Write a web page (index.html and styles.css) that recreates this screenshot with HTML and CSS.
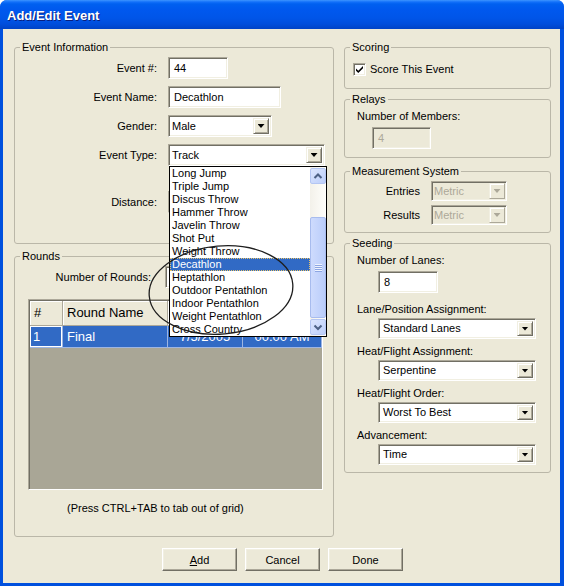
FILE: index.html
```html
<!DOCTYPE html>
<html>
<head>
<meta charset="utf-8">
<title>Add/Edit Event</title>
<link rel="stylesheet" href="styles.css">
</head>
<body>
<div class="window">
  <div class="titlebar"><span class="title">Add/Edit Event</span></div>
  <div class="client">
    <div class="columns">
      <div class="col-left">
        <fieldset class="group g-info">
          <legend>Event Information</legend>
          <div class="form">
            <span class="lbl">Event #:</span>
            <div class="tb w60">44</div>
            <span class="lbl">Event Name:</span>
            <div class="tb w113">Decathlon</div>
            <span class="lbl">Gender:</span>
            <div class="sel w104"><span class="val">Male</span><span class="dbtn"><i class="tri"></i></span></div>
            <span class="lbl">Event Type:</span>
            <div class="sel w157 anchor">
              <span class="val">Track</span><span class="dbtn"><i class="tri"></i></span>
              <div class="droplist">
                <ul class="items">
                  <li>Long Jump</li>
                  <li>Triple Jump</li>
                  <li>Discus Throw</li>
                  <li>Hammer Throw</li>
                  <li>Javelin Throw</li>
                  <li>Shot Put</li>
                  <li>Weight Throw</li>
                  <li class="hl">Decathlon</li>
                  <li>Heptathlon</li>
                  <li>Outdoor Pentathlon</li>
                  <li>Indoor Pentathlon</li>
                  <li>Weight Pentathlon</li>
                  <li>Cross Country</li>
                </ul>
                <div class="vscroll">
                  <div class="sbtn"><svg width="14" height="14" viewBox="0 0 14 14"><polyline points="3.5,9 7,5.5 10.5,9" fill="none" stroke="#4D6185" stroke-width="2"/></svg></div>
                  <div class="thumb"><i class="grip"></i></div>
                  <div class="sbtn down"><svg width="14" height="14" viewBox="0 0 14 14"><polyline points="3.5,5.5 7,9 10.5,5.5" fill="none" stroke="#4D6185" stroke-width="2"/></svg></div>
                </div>
              </div>
            </div>
            <span class="lbl dist">Distance:</span>
            <div class="tb w60 dist"></div>
          </div>
        </fieldset>

        <fieldset class="group g-rounds">
          <legend>Rounds</legend>
          <div class="rounds-row">
            <span class="lbl">Number of Rounds:</span>
            <div class="tb w60"></div>
          </div>
          <div class="grid">
            <div class="grow ghead">
              <div class="gc c1">#</div>
              <div class="gc c2">Round Name</div>
              <div class="gc c3"></div>
              <div class="gc c4"></div>
            </div>
            <div class="grow gsel">
              <div class="gc c1 focus">1</div>
              <div class="gc c2">Final</div>
              <div class="gc c3">7/5/2005</div>
              <div class="gc c4">00:00 AM</div>
            </div>
          </div>
          <p class="note">(Press CTRL+TAB to tab out of grid)</p>
        </fieldset>
      </div>

      <div class="col-right">
        <fieldset class="group g-scoring">
          <legend>Scoring</legend>
          <div class="check-row">
            <span class="chk"><svg width="11" height="11" viewBox="0 0 11 11"><path d="M2 4.5 L4.3 6.8 L9 2.1 L9 4.3 L4.3 9 L2 6.7 Z" fill="#000"/></svg></span>
            <span class="chk-lbl">Score This Event</span>
          </div>
        </fieldset>

        <fieldset class="group g-relays">
          <legend>Relays</legend>
          <div class="slbl first">Number of Members:</div>
          <div class="tb w59 disabled members">4</div>
        </fieldset>

        <fieldset class="group g-measure">
          <legend>Measurement System</legend>
          <div class="mform">
            <span class="mlbl">Entries</span>
            <div class="sel small disabled"><span class="val">Metric</span><span class="dbtn"><i class="tri"></i></span></div>
            <span class="mlbl">Results</span>
            <div class="sel small disabled"><span class="val">Metric</span><span class="dbtn"><i class="tri"></i></span></div>
          </div>
        </fieldset>

        <fieldset class="group g-seeding">
          <legend>Seeding</legend>
          <div class="slbl first">Number of Lanes:</div>
          <div class="tb w60 lanes">8</div>
          <div class="slbl next">Lane/Position Assignment:</div>
          <div class="sel seed"><span class="val">Standard Lanes</span><span class="dbtn"><i class="tri"></i></span></div>
          <div class="slbl">Heat/Flight Assignment:</div>
          <div class="sel seed"><span class="val">Serpentine</span><span class="dbtn"><i class="tri"></i></span></div>
          <div class="slbl">Heat/Flight Order:</div>
          <div class="sel seed"><span class="val">Worst To Best</span><span class="dbtn"><i class="tri"></i></span></div>
          <div class="slbl">Advancement:</div>
          <div class="sel seed"><span class="val">Time</span><span class="dbtn"><i class="tri"></i></span></div>
        </fieldset>
      </div>
    </div>

    <div class="buttons">
      <button class="pbtn"><u>A</u>dd</button>
      <button class="pbtn">Cancel</button>
      <button class="pbtn">Done</button>
    </div>
  </div>

  <svg class="ellipse" width="160" height="100" viewBox="0 0 160 100">
    <ellipse cx="76" cy="51" rx="72" ry="44" transform="rotate(-5 76 51)" fill="none" stroke="#1e1e1e" stroke-width="1.3"/>
  </svg>
</div>
</body>
</html>
```

FILE: styles.css
```css
* { box-sizing: border-box; }
html, body { margin: 0; padding: 0; }
body {
  width: 564px;
  height: 586px;
  overflow: hidden;
  background: #ffffff;
  font-family: "Liberation Sans", Arial, sans-serif;
  font-size: 11px;
  color: #000;
}
.window {
  position: relative;
  width: 564px;
  height: 586px;
  display: flex;
  flex-direction: column;
  background: #0050DE;
  border-radius: 7px 7px 0 0;
  overflow: hidden;
}
.titlebar {
  height: 29px;
  flex: none;
  padding: 9px 0 0 7px;
  background: linear-gradient(to bottom, #3D95FF 0px, #1270FA 2px, #0060F0 4px, #0058EE 10px, #0055E8 18px, #004EDC 24px, #0043C6 29px);
}
.title {
  font-weight: bold;
  font-size: 13px;
  line-height: 14px;
  color: #fff;
  text-shadow: 1px 1px 0 #0A1F7D;
}
.client {
  flex: 1;
  margin: 0 4px 3px 3px;
  background: #ECE9D8;
  padding: 11px 9px 0 11px;
}
.columns {
  display: flex;
  align-items: flex-start;
  gap: 10px;
}
.col-left { width: 320px; flex: none; }
.col-right { width: 207px; flex: none; }

/* group boxes */
.group {
  margin: 0;
  min-width: 0;
  border: 1px solid #BAB7A8;
  border-radius: 3px;
  padding: 0;
}
.group legend {
  padding: 0 2px;
  margin-left: 5px;
  line-height: 14px;
  font-size: 11px;
}

/* event information */
.g-info { padding: 3px 0 30px 0; }
.form {
  display: grid;
  grid-template-columns: 142px 1fr;
  column-gap: 11px;
  row-gap: 7px;
  align-items: start;
}
.lbl {
  line-height: 22px;
  height: 22px;
  text-align: right;
  white-space: nowrap;
}
.form > .tb, .form > .sel { justify-self: start; }
.dist { margin-top: 18px; }

/* text boxes */
.tb {
  height: 22px;
  background: #fff;
  border: 1px solid;
  border-color: #ACA899 #fff #fff #ACA899;
  box-shadow: inset 1px 1px 0 #716F64, inset -1px -1px 0 #F1EFE2;
  padding-left: 5px;
  line-height: 20px;
  white-space: nowrap;
}
.w59 { width: 59px; }
.w60 { width: 60px; }
.w113 { width: 113px; }
.tb.disabled { background: #ECE9D8; color: #ACA899; }

/* selects */
.sel {
  display: flex;
  height: 22px;
  background: #fff;
  border: 1px solid;
  border-color: #ACA899 #fff #fff #ACA899;
  box-shadow: inset 1px 1px 0 #716F64, inset -1px -1px 0 #F1EFE2;
  padding: 2px;
}
.sel .val {
  flex: 1;
  line-height: 16px;
  padding-left: 1px;
  white-space: nowrap;
  overflow: hidden;
}
.dbtn {
  width: 16px;
  flex: none;
  display: flex;
  align-items: center;
  justify-content: center;
  background: #ECE9D8;
  border: 1px solid;
  border-color: #F1EFE2 #716F64 #716F64 #F1EFE2;
  box-shadow: inset 1px 1px 0 #fff, inset -1px -1px 0 #ACA899;
}
.tri {
  display: block;
  width: 7px;
  height: 4px;
  background: #000;
  clip-path: polygon(0 0, 100% 0, 50% 100%);
}
.w104 { width: 104px; }
.w157 { width: 157px; }
.sel.small { width: 76px; height: 20px; padding: 1px; }
.sel.small .val { line-height: 16px; }
.sel.disabled { background: #ECE9D8; color: #ACA899; }
.sel.disabled .tri { background: #ACA899; }
.sel.disabled .dbtn { border-color: #F1EFE2 #ACA899 #ACA899 #F1EFE2; box-shadow: inset 1px 1px 0 #fff; }
.sel.seed { width: 158px; height: 21px; margin: 2px 0 0 33px; }
.sel.seed .val { line-height: 15px; padding-left: 2px; }

/* dropdown list overlay */
.anchor { position: relative; }
.droplist {
  position: absolute;
  left: 0;
  top: 21px;
  width: 158px;
  height: 171px;
  z-index: 10;
  display: flex;
  background: #fff;
  border: 1px solid #000;
}
.items {
  list-style: none;
  margin: 0;
  padding: 0;
  flex: 1;
}
.items li {
  height: 13px;
  line-height: 13px;
  padding-left: 2px;
  white-space: nowrap;
}
.items li.hl {
  background: #316AC5;
  color: #fff;
  outline: 1px dotted #E8C36A;
  outline-offset: -1px;
}
.vscroll {
  width: 16px;
  flex: none;
  display: flex;
  flex-direction: column;
  padding: 1px 0;
  background: linear-gradient(to right, #F3F1EA, #FEFEFB);
}
.sbtn {
  height: 16px;
  flex: none;
  border: 1px solid #B4C6F3;
  border-radius: 2px;
  background: linear-gradient(to bottom right, #DCE6FE, #BCCEFA);
  display: flex;
  align-items: center;
  justify-content: center;
}
.sbtn.down { margin-top: auto; }
.thumb {
  margin-top: 33px;
  height: 101px;
  flex: none;
  border: 1px solid #A8BCEE;
  border-radius: 2px;
  background: linear-gradient(to right, #CEDBFD, #BACDFA);
  display: flex;
  align-items: center;
  justify-content: center;
}
.grip {
  display: block;
  width: 7px;
  height: 8px;
  background: repeating-linear-gradient(to bottom, #EEF3FE 0 1px, #8DA6E2 1px 2px);
}

/* rounds */
.g-rounds { margin-top: 5px; padding: 3px 0 21px 0; }
.rounds-row {
  display: grid;
  grid-template-columns: 136px 60px;
  column-gap: 14px;
}
.grid {
  margin: 11px 0 0 13px;
  width: 295px;
  height: 191px;
  background: #A9A696;
  border: 1px solid;
  border-color: #ACA899 #fff #fff #ACA899;
  box-shadow: inset 1px 1px 0 #716F64;
  padding: 1px 0 0 1px;
  font-size: 13px;
}
.grow { display: flex; }
.gc {
  padding-left: 4px;
  white-space: nowrap;
  overflow: hidden;
}
.c1 { width: 33px; }
.c2 { width: 105px; }
.c3 { width: 75px; }
.c4 { width: 79px; }
.ghead .gc {
  height: 25px;
  line-height: 24px;
  background: #ECE9D8;
  border-right: 1px solid #ACA899;
  border-bottom: 1px solid #ACA899;
  box-shadow: inset 1px 1px 0 #fff;
}
.gsel .gc {
  height: 22px;
  line-height: 21px;
  background: #316AC5;
  color: #fff;
  border-right: 1px solid #9DB5E2;
  border-bottom: 1px solid #9DB5E2;
}
.gsel .c3, .gsel .c4 { text-align: center; padding-left: 0; }
.gsel .focus { box-shadow: inset 0 0 0 1px #fff; padding-left: 3px; }
.note {
  margin: 12px 0 0 52px;
  line-height: 13px;
}

/* right column */
.g-scoring { padding: 9px 0 12px 0; }
.check-row { display: flex; align-items: center; height: 13px; }
.chk {
  width: 13px;
  height: 13px;
  margin-left: 8px;
  background: #fff;
  border: 1px solid;
  border-color: #ACA899 #fff #fff #ACA899;
  box-shadow: inset 1px 1px 0 #716F64, inset -1px -1px 0 #F1EFE2;
  display: flex;
  align-items: center;
  justify-content: center;
}
.chk-lbl { margin-left: 4px; line-height: 13px; }

.g-relays { margin-top: 3px; padding: 0 0 8px 0; }
.slbl { margin: 6px 0 0 12px; line-height: 13px; white-space: nowrap; }
.slbl.first { margin-top: 4px; }
.slbl.next { margin-top: 10px; }
.members { margin: 4px 0 0 27px; }
.lanes { margin: 4px 0 0 33px; }

.g-measure { margin-top: 6px; padding: 3px 0 7px 0; }
.mform {
  display: grid;
  grid-template-columns: 75px 76px;
  column-gap: 11px;
  row-gap: 4px;
}
.mlbl { text-align: right; line-height: 20px; }

.g-seeding { margin-top: 3px; padding: 0 0 7px 0; }

/* buttons */
.buttons {
  display: flex;
  justify-content: center;
  gap: 8px;
  margin-top: 11px;
}
.pbtn {
  width: 75px;
  height: 23px;
  padding: 0;
  font-family: "Liberation Sans", Arial, sans-serif;
  font-size: 11px;
  color: #000;
  background: #ECE9D8;
  border: 1px solid;
  border-color: #fff #716F64 #716F64 #fff;
  box-shadow: inset -1px -1px 0 #ACA899, inset 1px 1px 0 #F1EFE2;
  border-radius: 0;
}

/* annotation ellipse */
.ellipse {
  position: absolute;
  left: 145px;
  top: 239px;
  z-index: 20;
  pointer-events: none;
}
```
